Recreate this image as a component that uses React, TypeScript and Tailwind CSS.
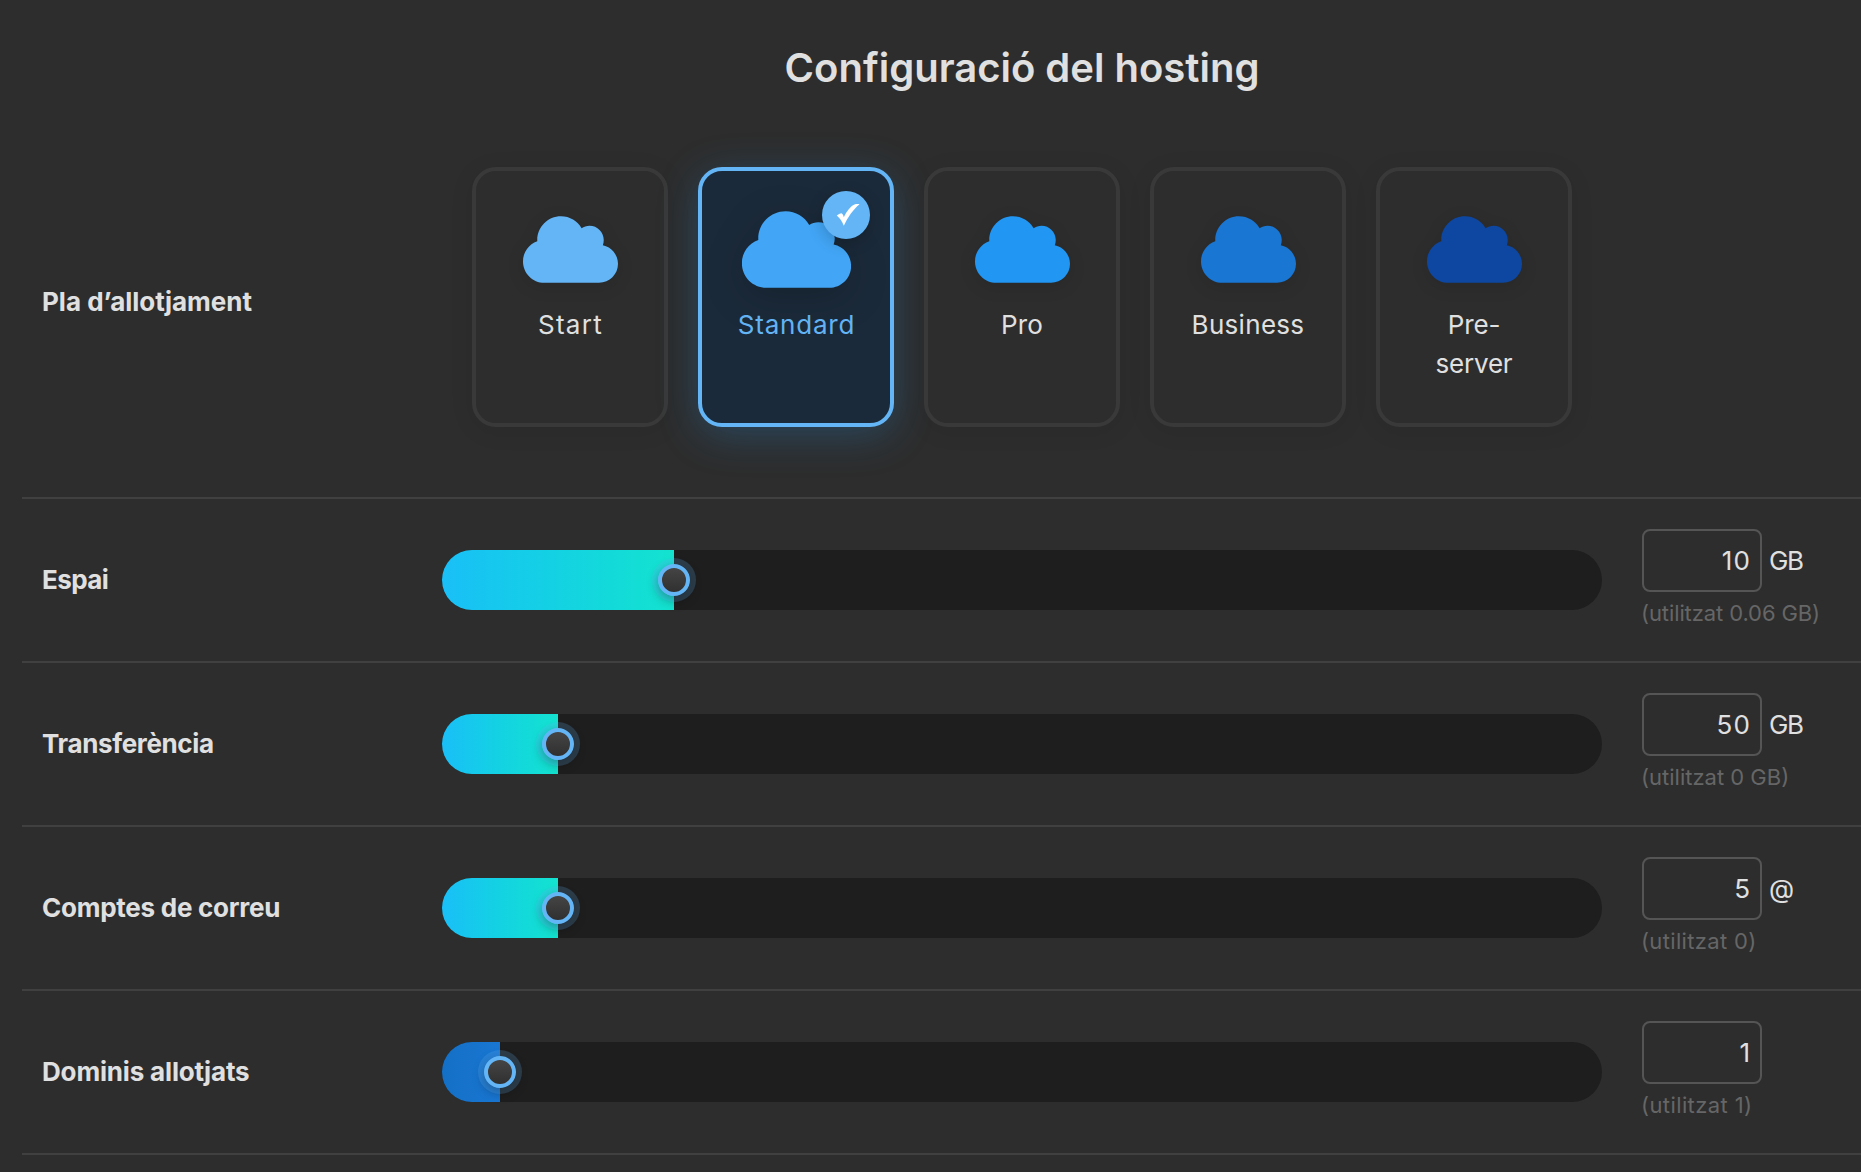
import { FaCloud } from "react-icons/fa";

type Plan = { lines: { text: string; cls: string }[]; color: string; selected?: boolean };

const PLANS: Plan[] = [
  { lines: [{ text: "Start", cls: "tracking-[1.3px] pl-px" }], color: "text-[#64b5f6]" },
  { lines: [{ text: "Standard", cls: "tracking-[0.8px] pl-px" }], color: "text-[#42a5f5]", selected: true },
  { lines: [{ text: "Pro", cls: "tracking-[0.2px]" }], color: "text-[#2196f3]" },
  { lines: [{ text: "Business", cls: "tracking-[0.3px]" }], color: "text-[#1976d2]" },
  {
    lines: [
      { text: "Pre-", cls: "tracking-[-0.2px]" },
      { text: "server", cls: "tracking-[-0.2px]" },
    ],
    color: "text-[#0d47a1]",
  },
];

type Resource = {
  label: string;
  labelCls: string;
  percent: number;
  fill: string;
  value: string;
  valueCls: string;
  unit?: string;
  used: string;
  usedCls: string;
};

const FILL_CYAN = "bg-linear-to-r from-[#1abff7] via-[#14d2e2] to-[#14e3cf]";
const FILL_BLUE = "bg-linear-to-r from-[#1470c6] to-[#1976d2]";

const RESOURCES: Resource[] = [
  {
    label: "Espai", labelCls: "tracking-[-0.6px]", percent: 20, fill: FILL_CYAN,
    value: "10", valueCls: "tracking-[1.2px] -mr-[1.2px]", unit: "GB",
    used: "(utilitzat 0.06 GB)", usedCls: "tracking-[-0.1px]",
  },
  {
    label: "Transferència", labelCls: "tracking-[-0.35px]", percent: 10, fill: FILL_CYAN,
    value: "50", valueCls: "tracking-[1.4px] -mr-[1.4px]", unit: "GB",
    used: "(utilitzat 0 GB)", usedCls: "tracking-[0px]",
  },
  {
    label: "Comptes de correu", labelCls: "tracking-[-0.25px]", percent: 10, fill: FILL_CYAN,
    value: "5", valueCls: "", unit: "@",
    used: "(utilitzat 0)", usedCls: "tracking-[0.34px]",
  },
  {
    label: "Dominis allotjats", labelCls: "tracking-[-0.17px]", percent: 5, fill: FILL_BLUE,
    value: "1", valueCls: "",
    used: "(utilitzat 1)", usedCls: "tracking-[0.4px]",
  },
];

function PlanCard({ lines, color, selected }: Plan) {
  return (
    <button
      className={`relative flex h-[260px] w-[196px] flex-col items-center rounded-3xl border-4 pt-10 text-[26px] leading-[39px] ${
        selected
          ? "border-[#64b5f6] bg-[#1b2a3a] text-[#64b5f6] shadow-[0_8px_40px_rgba(33,150,243,0.25)]"
          : "border-[#393939] bg-[#2d2d2d] text-[#e0e0e0] shadow-[0_4px_24px_rgba(0,0,0,0.08)]"
      }`}
    >
      <FaCloud
        className={`mb-[17px] h-[77px] w-[95px] shrink-0 ${color} ${
          selected
            ? "scale-[1.15] drop-shadow-[0_8px_16px_rgba(0,0,0,0.2)]"
            : "drop-shadow-[0_4px_8px_rgba(0,0,0,0.1)]"
        }`}
      />
      {lines.map(({ text, cls }) => (
        <span key={text} className={cls}>{text}</span>
      ))}
      {selected && (
        <span className="absolute top-5 right-5 grid h-12 w-12 place-items-center rounded-full bg-[#64b5f6] text-white shadow-[0_4px_16px_rgba(0,0,0,0.2)]">
          <svg viewBox="0 0 48 48" className="h-12 w-12" fill="currentColor">
            <path d="M14.8 24.6c1.500-1.300 3.200-2.100 4.700-2.300 1.300.8 1.900 2 2.300 3.900C24.800 20 28.500 15.300 32.500 13.500c1.600-.5 3.400-.5 5.100-.2C31 18.500 25.800 26.500 21.800 34.800 20.200 30.800 18 27.200 14.800 24.600z" />
          </svg>
        </span>
      )}
    </button>
  );
}

function Slider({ percent, fill }: { percent: number; fill: string }) {
  return (
    <div className="relative h-[60px] w-[1160px]">
      <div className="h-full overflow-hidden rounded-full bg-[#1e1e1e]">
        <div className={`h-full ${fill}`} style={{ width: `${percent}%` }} />
      </div>
      <span
        className="absolute top-1/2 h-8 w-8 -translate-1/2 rounded-full border-4 border-[#64b5f6] bg-linear-to-b from-[#484848] to-[#2d2d2d] bg-origin-border shadow-[0_0_0_6px_rgba(100,181,246,0.2),0_4px_12px_rgba(0,0,0,0.4)]"
        style={{ left: `${percent}%` }}
      />
    </div>
  );
}

function ResourceRow({ label, labelCls, percent, fill, value, valueCls, unit, used, usedCls }: Resource) {
  return (
    <div className="flex h-[164px] items-center border-b-2 border-[#404040] pl-5">
      <p className={`w-[400px] pb-px text-[26px] font-bold ${labelCls}`}>{label}</p>
      <Slider percent={percent} fill={fill} />
      <div className="ml-10 h-[102px]">
        <div className="flex items-center gap-[7px] text-[26px] leading-[39px]">
          <div className="flex h-[63px] w-[120px] items-center justify-end rounded-lg border-2 border-[#555555] pr-2.5">
            <span className={valueCls}>{value}</span>
          </div>
          {unit && <span className={unit === "GB" ? "tracking-[-1.4px]" : ""}>{unit}</span>}
        </div>
        <p className={`mt-[5px] -ml-px text-[22px] leading-[33px] whitespace-nowrap text-[#666666] ${usedCls}`}>{used}</p>
      </div>
    </div>
  );
}

export default function App() {
  return (
    <main className="h-[1172px] overflow-hidden bg-[#2d2d2d] pl-[22px] font-['Inter',sans-serif] text-[#e0e0e0]">
      <h1 className="flex h-[107px] w-[2000px] items-end justify-center pb-[9px] text-[40px] leading-[60px] font-semibold">
        Configuració del hosting
      </h1>

      <div className="flex h-[392px] items-center border-b-2 border-[#404040] pl-5">
        <p className="w-[400px] pb-px text-[26px] font-bold">Pla d’allotjament</p>
        <div className="flex w-[1160px] justify-center gap-[30px] pb-2.5">
          {PLANS.map((plan) => (
            <PlanCard key={plan.lines[0].text} {...plan} />
          ))}
        </div>
      </div>

      {RESOURCES.map((resource) => (
        <ResourceRow key={resource.label} {...resource} />
      ))}
    </main>
  );
}
